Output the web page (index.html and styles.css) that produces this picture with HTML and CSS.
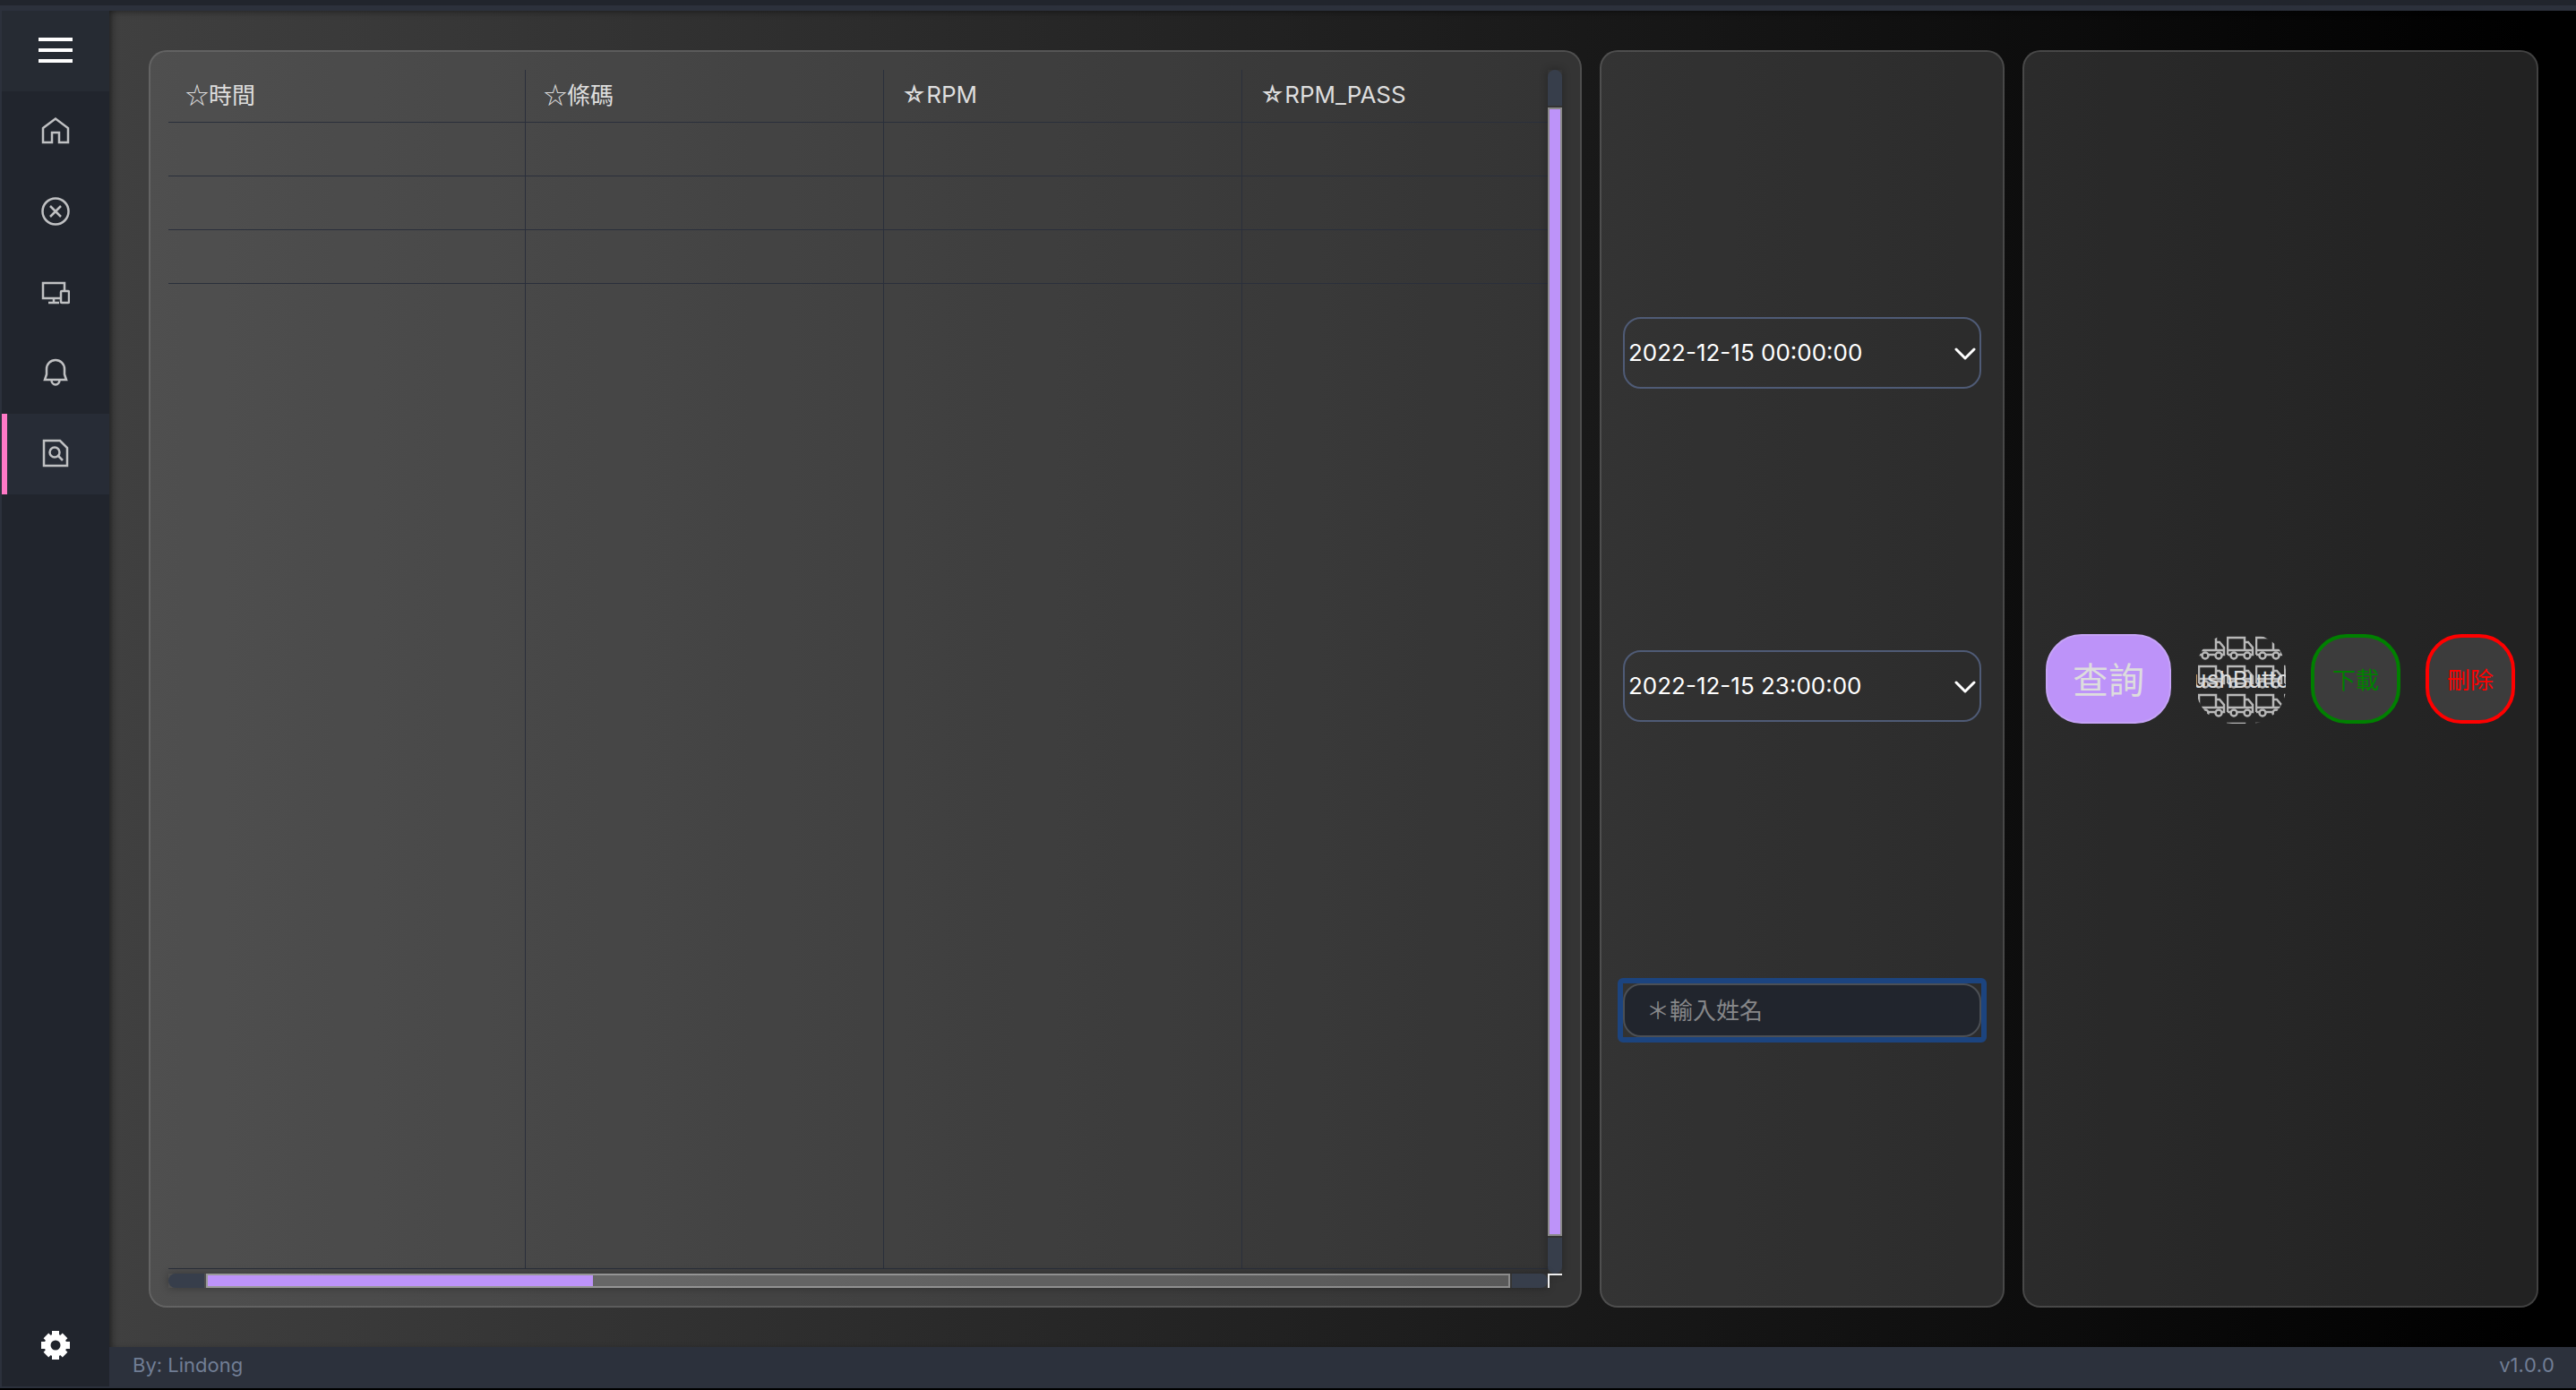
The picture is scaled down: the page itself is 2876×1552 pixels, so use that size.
FILE: index.html
```html
<!DOCTYPE html>
<html lang="zh-Hant">
<head>
<meta charset="utf-8">
<meta name="viewport" content="width=device-width, initial-scale=1">
<title>紀錄查詢</title>
<link rel="stylesheet" href="styles.css">
</head>
<body>
<div class="app">
  <nav class="sidebar">
    <button class="nav-item nav-toggle" type="button" aria-label="選單">
      <svg width="40" height="32" viewBox="0 0 40 32" fill="none" stroke="#fff" stroke-width="4"><path d="M1 4h38M1 16h38M1 28h38"/></svg>
    </button>
    <button class="nav-item" type="button" aria-label="首頁">
      <svg class="icon" viewBox="0 0 32 32"><path d="M2 13 16 2.500l14 10.500v16H20V18h-8v11H2z"/></svg>
    </button>
    <button class="nav-item" type="button" aria-label="停止">
      <svg class="icon" viewBox="0 0 32 32"><circle cx="16" cy="16" r="14.500"/><path d="m10 10 12 12M22 10 10 22"/></svg>
    </button>
    <button class="nav-item" type="button" aria-label="裝置">
      <svg class="icon" viewBox="0 0 32 32"><path d="M21 23H2V6h24v8M14 23v4M8 28h12"/><rect x="22" y="15" width="9" height="13" rx="1"/></svg>
    </button>
    <button class="nav-item" type="button" aria-label="通知">
      <svg class="icon" viewBox="0 0 32 32"><path d="M6 18V12a10 10 0 0 1 20 0v6l2 6H4zM11.500 24.500a4.500 5 0 0 0 9 0"/></svg>
    </button>
    <button class="nav-item active" type="button" aria-label="查詢紀錄">
      <svg class="icon" viewBox="0 0 32 32"><path d="M3 2h18l8 8v20H3z"/><circle cx="15" cy="15" r="5.500"/><path d="m19 19 5 5"/></svg>
    </button>
    <button class="nav-item nav-settings" type="button" aria-label="設定">
      <svg width="32" height="32" viewBox="0 0 32 32"><g fill="#fff"><circle cx="16" cy="16" r="12.500"/><path d="M12 0h8v32h-8zM0 12h32v8H0z"/><path d="M12 1h8v30h-8zM1 12h30v8H1z" transform="rotate(45 16 16)"/></g><circle cx="16" cy="16" r="5.500" fill="#20242b"/></svg>
    </button>
  </nav>

  <main class="content">
    <section class="panel panel-table">
      <div class="viewport">
        <table class="records">
          <thead><tr><th class="cjk">☆時間</th><th class="cjk">☆條碼</th><th>☆RPM</th><th>☆RPM_PASS</th></tr></thead>
          <tbody>
            <tr><td></td><td></td><td></td><td></td></tr>
            <tr><td></td><td></td><td></td><td></td></tr>
            <tr><td></td><td></td><td></td><td></td></tr>
            <tr class="filler"><td></td><td></td><td></td><td></td></tr>
          </tbody>
        </table>
      </div>
      <div class="scroll scroll-v"><i class="cap"></i><div class="track"><div class="thumb"></div></div><i class="cap"></i></div>
      <div class="scroll scroll-h"><i class="cap"></i><div class="track"><div class="thumb"></div></div><i class="cap"></i></div>
      <div class="corner"></div>
    </section>

    <section class="panel panel-filter">
      <div class="picker">
        <select aria-label="開始時間"><option>2022-12-15 00:00:00</option></select>
        <svg class="chevron" viewBox="0 0 24 14"><path d="m2 2 10 10L22 2"/></svg>
      </div>
      <div class="picker">
        <select aria-label="結束時間"><option>2022-12-15 23:00:00</option></select>
        <svg class="chevron" viewBox="0 0 24 14"><path d="m2 2 10 10L22 2"/></svg>
      </div>
      <div class="focus-ring"><input type="text" aria-label="姓名" placeholder="＊輸入姓名"></div>
    </section>

    <section class="panel panel-actions">
      <button class="action query" type="button">查詢</button>
      <button class="action push" type="button">
        <svg class="trucks" width="100" height="100">
          <defs>
            <pattern id="truck" width="32" height="32" patternUnits="userSpaceOnUse" x="34" y="34">
              <g fill="none" stroke="#b8b8b8" stroke-width="2.500">
                <path d="M1 21V2h19v14M20 7h4l5 6v8h-3M1 16h29M12 21h7M1 21h3"/>
                <circle cx="8" cy="22" r="3.500"/><circle cx="23" cy="22" r="3.500"/>
              </g>
            </pattern>
          </defs>
          <rect width="100" height="100" fill="url(#truck)"/>
        </svg>
        <span class="push-label">PushButton</span>
      </button>
      <button class="action download" type="button">下載</button>
      <button class="action delete" type="button">刪除</button>
    </section>
  </main>

  <footer class="footer"><span>By: Lindong</span><span class="version">v1.0.0</span></footer>
</div>
</body>
</html>
```
FILE: styles.css
```css
* { box-sizing: border-box; }

body {
  margin: 0;
  background: #000;
  color: #dddddd;
  font-family: Inter, "Noto Sans CJK TC", sans-serif;
  font-size: 26px;
}

button, input, select { font: inherit; color: inherit; }

.app {
  display: grid;
  grid-template-columns: 122px 1fr;
  grid-template-rows: 1fr 46px;
  height: calc(100vh - 2px);
  border-top: 6px solid #21252d;
  background: #2c313c;
  padding-top: 6px;
}

/* Sidebar */
.sidebar {
  grid-row: 1 / 3;
  display: flex;
  flex-direction: column;
  margin: 0 0 2px 2px;
  background: #21252d;
}
.nav-item {
  display: flex;
  align-items: center;
  justify-content: center;
  height: 90px;
  padding: 0 0 2px;
  border: 0;
  background: none;
}
.nav-toggle { background: #262b33; }
.nav-item.active {
  background: #272c36;
  box-shadow: inset 6px 0 #ff79c6;
}
.nav-settings { margin-top: auto; }
.icon {
  width: 32px;
  height: 32px;
  fill: none;
  stroke: #c0c1c3;
  stroke-width: 2.5;
}

/* Content */
.content {
  display: grid;
  grid-template-columns: 1600fr 452fr 576fr;
  gap: 20px;
  min-width: 0;
  min-height: 0;
  padding: 44px 42px 44px 44px;
  background: linear-gradient(90deg, #404040, #000 98%);
  box-shadow: inset 6px 0 8px -4px rgba(0, 0, 0, .5), inset 0 6px 8px -6px rgba(0, 0, 0, .4);
}
.panel {
  min-width: 0;
  min-height: 0;
  border: 2px solid rgba(160, 160, 160, .25);
  border-radius: 20px;
  background: rgba(121, 121, 121, .28);
}

/* Record table */
.panel-table {
  display: grid;
  grid-template-columns: 1fr 16px;
  grid-template-rows: 1fr 16px;
  padding: 20px;
}
.viewport {
  min-width: 0;
  min-height: 0;
  overflow: hidden;
  padding-bottom: 5px;
}
.records {
  width: 1600px;
  height: 100%;
  margin-left: -1px;
  table-layout: fixed;
  border-collapse: separate;
  border-spacing: 0;
}
.records th, .records td {
  padding: 0 20px;
  border: 0 solid #2a2f3b;
  border-width: 0 1px 1px 0;
  text-align: left;
  font-weight: 400;
}
.records th { height: 59px; padding-bottom: 2px; line-height: 32px; }
.records td { height: 60px; }
.records .filler td { height: auto; }
.records .cjk { padding-bottom: 4px; font-family: "Noto Sans CJK TC", sans-serif; }

/* Scroll bars */
.scroll { display: flex; min-width: 0; min-height: 0; box-shadow: 0 0 10px rgba(0, 0, 0, .3); }
.scroll-v { flex-direction: column; }
.cap { flex: 0 0 40px; background: #373e4b; }
.scroll-v .cap:first-child { border-radius: 8px 8px 0 0; }
.scroll-v .cap:last-child { border-radius: 0 0 8px 8px; }
.scroll-h .cap:first-child { border-radius: 8px 0 0 8px; }
.scroll-h .cap:last-child { border-radius: 0 8px 8px 0; }
.track {
  flex: 1;
  margin: 0 2px;
  border: 2px solid rgba(255, 255, 255, .3);
  background: rgba(255, 255, 255, .18);
}
.scroll-v .track { margin: 2px 0; }
.thumb { background: #bd93f9; }
.scroll-v .thumb { height: 100%; }
.scroll-h .thumb { width: 29.6%; height: 100%; }
.corner { border: 2px solid #eee; border-width: 2px 0 0 2px; }

/* Filters */
.panel-filter {
  display: flex;
  flex-direction: column;
  justify-content: space-evenly;
  padding: 4px 24px 8px;
}
.picker { position: relative; }
.picker select {
  display: block;
  width: 100%;
  height: 80px;
  padding: 0 4px 2px;
  border: 2px solid #4f5b76;
  border-radius: 20px;
  background: none;
  color: #fff;
  font-kerning: none;
  appearance: none;
}
.chevron {
  position: absolute;
  top: 34px;
  right: 6px;
  width: 24px;
  height: 14px;
  fill: none;
  stroke: #fff;
  stroke-width: 3;
  stroke-linecap: round;
  stroke-linejoin: round;
  pointer-events: none;
}
.focus-ring {
  margin: -6px;
  border: 6px solid #1c447f;
  border-radius: 6px;
}
.focus-ring input {
  display: block;
  width: 100%;
  height: 60px;
  padding: 0 24px;
  border: 2px solid #4b4f55;
  border-radius: 20px;
  background: #21252d;
  outline: 0;
}
.focus-ring input::placeholder { color: #868789; opacity: 1; }

/* Actions */
.panel-actions {
  display: flex;
  align-items: center;
  justify-content: space-between;
  padding: 0 24px;
}
.action {
  width: 100px;
  height: 100px;
  padding: 0 0 2px;
  border: 4px solid;
  border-radius: 40px;
  background: #3c3c3c;
}
.query {
  width: 140px;
  border: 2px solid #c5a3f6;
  background: #bd93f9;
  font-size: 40px;
}
.push {
  position: relative;
  display: flex;
  align-items: center;
  justify-content: center;
  padding: 0;
  overflow: hidden;
  border: 0;
  background: none;
}
.trucks { position: absolute; inset: 0; }
.push-label { position: relative; }
.download { color: #008000; }
.delete { color: #ff0000; }

/* Footer */
.footer {
  display: flex;
  align-items: center;
  justify-content: space-between;
  padding: 0 24px 6px 26px;
  color: #717e95;
  font-size: 22px;
}
.version { font-kerning: none; }
```
